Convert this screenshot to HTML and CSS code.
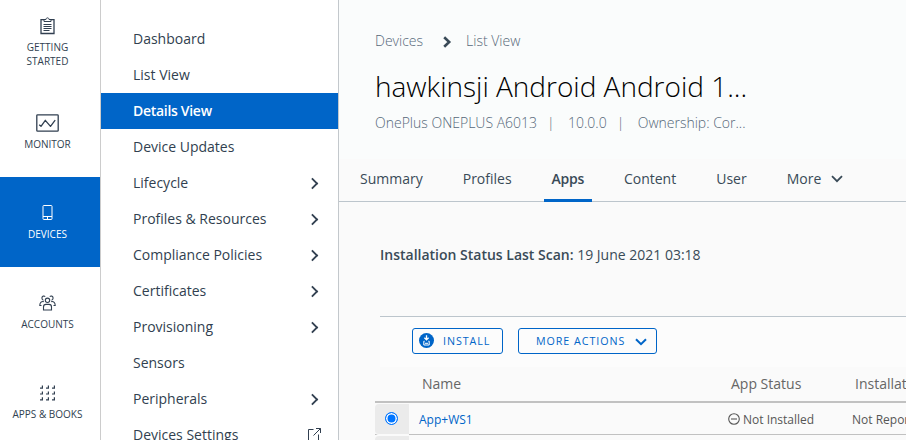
FILE: index.html
```html
<!DOCTYPE html>
<html lang="en">
<head>
<meta charset="utf-8">
<title>Device Details</title>
<link rel="stylesheet" href="styles.css">
</head>
<body>
<div class="app">
  <nav class="rail">
    <a class="rail-item first">
      <svg width="15" height="18" viewBox="0 0 15 18" fill="none" stroke="currentColor"><path d="M4 2.7H1V16.5H14V2.7H11" stroke-width="1.3"/><path d="M4 4.5V2.5H6C6 .3 9 .3 9 2.5H11V4.5Z"/><path d="M3.5 7.5H11.5M3.5 9.5H11.5M3.5 11.5H11.5M3.5 13.5H9.5"/></svg>
      <span>GETTING<br>STARTED</span>
    </a>
    <a class="rail-item">
      <svg width="23" height="18" viewBox="0 0 23 18" fill="none" stroke="currentColor" stroke-width="1.3" stroke-linejoin="round"><rect x=".8" y=".8" width="21.4" height="16.4" rx=".8"/><path d="M3.2 10.7L5 12.3L9.3 6.3L14.5 12.4L19.2 6.2"/></svg>
      <span>MONITOR</span>
    </a>
    <a class="rail-item active">
      <svg width="23" height="18" viewBox="0 0 23 18" fill="none" stroke="currentColor"><rect x="7" y="1.5" width="9" height="14" rx=".8"/><path d="M7 12.5H16M11.5 12.5V15.5"/></svg>
      <span>DEVICES</span>
    </a>
    <a class="rail-item">
      <svg width="17" height="18" viewBox="0 0 17 18" fill="none" stroke="currentColor" stroke-width="1.1"><path d="M4.5 16V13C4.5 11.4 5.5 10.4 7 10.4H10C11.5 10.4 12.5 11.4 12.5 13V16Z"/><circle cx="8.5" cy="6.3" r="2.2"/><path d="M6.2 2.6C5.2 1.5 2.9 2 2.9 4C2.9 5.2 3.5 6 4.5 6.2M10.8 2.6C11.8 1.5 14.1 2 14.1 4C14.1 5.2 13.5 6 12.5 6.2M4.8 7.6C2.2 7.2 .8 8.5 .8 11.5H2.5M12.2 7.6C14.8 7.2 16.2 8.5 16.2 11.5H14.5"/></svg>
      <span>ACCOUNTS</span>
    </a>
    <a class="rail-item">
      <svg width="15" height="18" viewBox="0 0 15 18" fill="none" stroke="currentColor" stroke-width="1.2"><path d="M0 4.2H2.4V1.6M6 4.2H8.4V1.6M12 4.2H14.4V1.6M0 10H2.4V7.4M6 10H8.4V7.4M12 10H14.4V7.4M0 15.8H2.4V13.2M6 15.8H8.4V13.2M12 15.8H14.4V13.2"/></svg>
      <span>APPS &amp; BOOKS</span>
    </a>
  </nav>
  <nav class="menu">
    <a>Dashboard</a>
    <a>List View</a>
    <a class="active">Details View</a>
    <a>Device Updates</a>
    <a>Lifecycle<i class="chev"></i></a>
    <a>Profiles &amp; Resources<i class="chev"></i></a>
    <a>Compliance Policies<i class="chev"></i></a>
    <a>Certificates<i class="chev"></i></a>
    <a>Provisioning<i class="chev"></i></a>
    <a>Sensors</a>
    <a>Peripherals<i class="chev"></i></a>
    <a>Devices Settings<svg class="ext" width="13" height="13" viewBox="0 0 13 13" fill="none" stroke="currentColor"><path d="M5.5 1.5H.5V12.5H10.5V6.5M8 .5H12.5V5M12.5 .5L5.5 7.5"/></svg></a>
  </nav>
  <main>
    <header>
      <div class="crumbs"><span>Devices</span><svg width="9" height="12" viewBox="0 0 9 12" fill="none" stroke="#394a57" stroke-width="2.6"><path d="M1.2 1.2L6.2 6L1.2 10.8"/></svg><span>List View</span></div>
      <h1>hawkinsji Android Android 1...</h1>
      <div class="meta"><span class="model">OnePlus ONEPLUS A6013</span><span class="bar">|</span><span class="version">10.0.0</span><span class="bar">|</span><span class="owner">Ownership: Cor...</span></div>
    </header>
    <div class="tabs">
      <a>Summary</a><a>Profiles</a><a class="active">Apps</a><a>Content</a><a>User</a><a>More<svg width="12" height="8" viewBox="0 0 12 8" fill="none" stroke="currentColor" stroke-width="1.8"><path d="M1 1.2L6 6.2L11 1.2"/></svg></a>
    </div>
    <p class="scan"><b>Installation Status Last Scan:</b> 19 June 2021 03:18</p>
    <div class="toolbar">
      <button class="install"><svg width="15" height="15" viewBox="0 0 15 15"><circle cx="7.5" cy="7.5" r="7.5" fill="#0065c8"/><path d="M7.5 2.3V6.5M5.4 4.8L7.5 6.8L9.6 4.8" fill="none" stroke="#fff" stroke-width="1.3"/><path d="M5.6 8.2H4.8V12H10.2V8.2H9.4M6 10.3H9" fill="none" stroke="#fff"/></svg><span>INSTALL</span></button>
      <button class="more"><span>MORE ACTIONS</span><svg width="12" height="8" viewBox="0 0 12 8" fill="none" stroke="currentColor" stroke-width="2"><path d="M1 1.2L6 6.2L11 1.2"/></svg></button>
    </div>
    <div class="table">
      <div class="row head"><span></span><span class="name">Name</span><span class="status">App Status</span><span>Installation Status</span></div>
      <div class="row item"><span class="pick"><i class="radio"></i></span><span class="name">App+WS1</span><span class="status"><svg width="12" height="12" viewBox="0 0 12 12" fill="none" stroke="currentColor" stroke-width="1.1"><circle cx="6" cy="6" r="5.3"/><path d="M3 6H9"/></svg>Not Installed</span><span class="report">Not Reported</span></div>
      <div class="row item"><span class="pick"></span><span></span><span></span><span></span></div>
    </div>
  </main>
</div>
</body>
</html>
```

FILE: styles.css
```css
* { box-sizing: border-box; }
body {
  margin: 0;
  height: 440px;
  overflow: hidden;
  font-family: "Open Sans", "Noto Sans", sans-serif;
  font-size: 14px;
  color: #394a57;
  background: #fafafa;
}
.app { display: flex; height: 440px; overflow: hidden; white-space: nowrap; }
.rail { width: 101px; flex: none; background: #fff; border-right: 1px solid #ccc; color: #313f50; }
.rail-item {
  height: 90px;
  padding: 27px 5px 0 0;
  display: flex;
  flex-direction: column;
  align-items: center;
  font-size: 10px;
  line-height: 14px;
  text-align: center;
}
.rail-item svg { flex: none; margin-bottom: 5px; }
.rail-item.first { height: 87px; padding-top: 17px; }
.rail-item.active { background: #0065c8; color: #fff; }
.menu { width: 238px; flex: none; padding-top: 21px; background: #fff; border-right: 1px solid #c3c8cc; color: #313f50; }
.menu a { display: flex; align-items: center; justify-content: space-between; height: 36px; padding: 0 17px 2px 32px; }
.menu .active { background: #0065c8; color: #fff; font-weight: 600; letter-spacing: -.3px; }
.chev { width: 9px; height: 9px; margin: 2px 4px 0 0; border: solid #313f50; border-width: 2px 2px 0 0; transform: rotate(45deg) scale(.9); }
main { flex: 1; min-width: 0; overflow: hidden; }
header { height: 159px; padding: 30px 0 0 36px; background: #fafcfc; font-weight: 300; }
.crumbs { display: flex; align-items: center; height: 20px; color: #566879; }
.crumbs svg { margin: 3px 14px 0 20px; }
h1 { margin: 16px 0 0; font-size: 28px; line-height: 40px; font-weight: 300; color: #000; }
.meta { display: flex; margin-top: 7px; line-height: 20px; color: #566879; }
.meta .bar { width: 4px; margin: 0 17px 0 10px; }
.tabs { display: flex; height: 43px; padding-left: 13px; border-bottom: 1px solid #bcc5cc; }
.tabs a { display: flex; align-items: center; height: 43px; padding: 0 8px 4px; margin-right: 24px; }
.tabs .active { padding-bottom: 1px; border-bottom: 3px solid #0065c8; font-weight: 600; letter-spacing: -.3px; }
.tabs svg { margin: 1px 0 0 10px; }
.scan { margin: 43px 0 0 41px; line-height: 20px; font-size: 14px; }
.scan b { font-weight: 600; }
.toolbar { display: flex; height: 51px; margin: 51px 0 0 41px; padding: 11px 0 0 32px; gap: 15px; border-top: 1px solid #bcc5cc; background: #fcfcfc; }
button { display: flex; align-items: center; height: 26px; padding: 0 0 1px; border: 1px solid #0065c8; border-radius: 3px; background: transparent; color: #0065c8; font: 10.7px "Open Sans", sans-serif; letter-spacing: .95px; }
.install { width: 91px; padding-left: 6px; gap: 9px; }
.install svg { margin-bottom: 1px; }
.more { width: 139px; padding-left: 17px; gap: 9px; }
.more svg { margin: 2px 0 0 1px; }
.table { margin-left: 36px; color: #565656; }
.row { display: grid; grid-template-columns: 34px 310px 136px 200px; align-items: center; }
.head { height: 36px; padding-bottom: 2px; border-bottom: 2px solid #c1c1c1; color: #666; }
.head .name { padding-left: 13px; }
.head .status { padding-left: 12px; }
.item { height: 32px; border-bottom: 1px solid #c1c1c1; font-size: 12px; }
.item .name { padding: 1px 0 0 10px; color: #0065c8; }
.item .status { display: flex; align-items: center; gap: 3px; padding: 1px 0 0 9px; }
.item .status svg { margin-bottom: 1px; }
.item .report { padding: 1px 0 0 9px; margin-left: -12px; }
.pick { align-self: end; width: 34px; height: 31px; margin-bottom: -1px; padding: 0 1px 1px 0; display: grid; place-items: center; background: #ebebeb; border-bottom: 1px solid #fafafa; border-radius: 4px 0 0 4px; }
.radio { width: 13px; height: 13px; border: 1px solid #0075ff; border-radius: 50%; background: #0075ff; box-shadow: inset 0 0 0 1.5px #fff; }
```
